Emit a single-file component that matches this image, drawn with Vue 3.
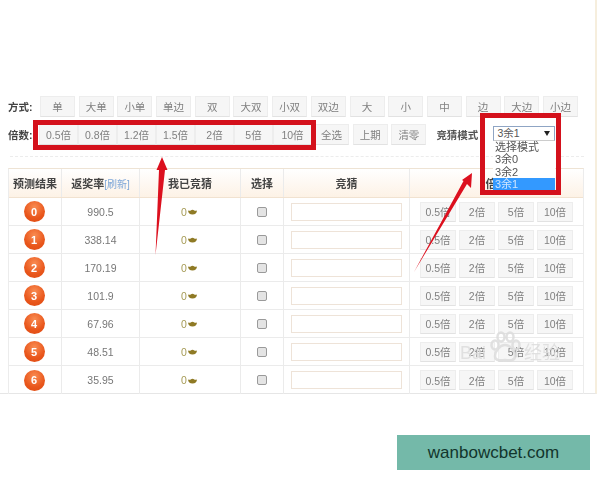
<script setup>
const modes = ['单','大单','小单','单边','双','大双','小双','双边','大','小','中','边','大边','小边']
const mults = ['0.5倍','0.8倍','1.2倍','1.5倍','2倍','5倍','10倍']
const actions = ['全选','上期','清零']
const rowBtns = ['0.5倍','2倍','5倍','10倍']
const rates = ['990.5','338.14','170.19','101.9','67.96','48.51','35.95']
const options = ['选择模式','3余0','3余2','3余1']
</script>

<template>
  <div class="stage">
    <div class="panel">
      <div class="toolbar">
        <div class="bar">
          <b class="label">方式:</b>
          <div class="btns spaced">
            <span v-for="m in modes" :key="m" class="btn mode">{{ m }}</span>
          </div>
        </div>
        <div class="bar second">
          <b class="label">倍数:</b>
          <div class="btns mults">
            <span v-for="m in mults" :key="m" class="btn mult">{{ m }}</span>
          </div>
          <div class="btns spaced actions">
            <span v-for="a in actions" :key="a" class="btn action">{{ a }}</span>
          </div>
          <b class="mode-label">竞猜模式</b>
          <div class="select-closed">3余1<i class="caret"></i></div>
        </div>
      </div>
      <div class="rule"></div>
      <div class="table">
        <div class="row head">
          <div class="cell">预测结果</div>
          <div class="cell">返奖率<span class="link">[刷新]</span></div>
          <div class="cell">我已竞猜</div>
          <div class="cell">选择</div>
          <div class="cell">竞猜</div>
          <div class="cell">倍数</div>
        </div>
        <div v-for="(r, i) in rates" :key="r" class="row">
          <div class="cell first"><span class="ball">{{ i }}</span></div>
          <div class="cell">{{ r }}</div>
          <div class="cell gold">0
            <svg class="ingot" viewBox="0 0 10 6" width="9" height="6">
              <path d="M0 1.2 Q2 2 3 1.2 Q5 0 7 1.2 Q8 2 10 1.2 Q9.6 5.6 5 5.8 Q.4 5.6 0 1.2Z" fill="#8f7a25"/>
            </svg>
          </div>
          <div class="cell"><span class="check"></span></div>
          <div class="cell"><span class="input"></span></div>
          <div class="cell quick">
            <span v-for="b in rowBtns" :key="b" class="btn small">{{ b }}</span>
          </div>
        </div>
      </div>
    </div>
    <div class="promo-wrap"><div class="promo">wanbowcbet.com</div></div>

    <div class="watermark">
      <span>Bai</span>
      <svg viewBox="0 0 32 32" width="32" height="32">
        <g fill="none" stroke="#dcdcdc" stroke-width="2.500">
          <ellipse cx="6" cy="14" rx="3.500" ry="4.500"/>
          <ellipse cx="12" cy="6" rx="3.500" ry="4.500"/>
          <ellipse cx="21" cy="6" rx="3.500" ry="4.500"/>
          <ellipse cx="27" cy="14" rx="3.500" ry="4.500"/>
          <path d="M16 14c-5 0-10 6-10 11 0 6 7 4 10 4s10 2 10-4c0-5-5-11-10-11Z"/>
        </g>
      </svg>
      <span>经验</span>
    </div>

    <div class="red-box box-a"></div>
    <div class="dropdown">
      <div v-for="(o, i) in options" :key="o" class="opt" :class="{ on: i === 3 }">{{ o }}</div>
    </div>
    <div class="red-box box-b"></div>

    <svg class="arrows" viewBox="0 0 600 480" width="600" height="480">
      <path d="M162 157 L167.500 170 L165 170 L155.500 255 L159 170 L156.500 170Z" fill="#dc101e"/>
      <path d="M472 173 L471 188 L467 184 L414 272 L463.500 181 L462 180Z" fill="#dc101e"/>
    </svg>
  </div>
</template>

<style>
html, body { margin: 0; background: #fff; }
</style>

<style scoped>
.stage {
  position: relative;
  width: 600px;
  height: 480px;
  overflow: hidden;
  background: #fff;
  font-family: "Liberation Sans", "Noto Sans CJK SC", sans-serif;
  font-size: 10.5px;
  color: #777;
}
.panel {
  height: 394px;
  padding: 96px 0 0 8px;
  box-sizing: border-box;
  width: 597px;
  border-right: 2px solid #f6eedd;
  border-bottom: 1px solid #e6e6e6;
  filter: blur(0.5px);
}
.toolbar { display: flex; flex-direction: column; gap: 7px; }
.bar { display: flex; align-items: center; height: 21px; }
.label { width: 32px; color: #444; font-size: 10.5px; white-space: nowrap; }
.btns { display: flex; }
.spaced { gap: 3.700px; }
.btn {
  display: flex;
  align-items: center;
  justify-content: center;
  box-sizing: border-box;
  height: 21px;
  background: #f6f6f6;
  border: 1px solid #ededed;
  border-bottom-color: #e2e2e2;
  color: #808080;
  white-space: nowrap;
}
.mode { width: 35px; }
.mults { margin-left: -1px; }
.mult { width: 39px; }
.actions { margin-left: 2px; }
.action { width: 35px; }
.mode-label { margin-left: 10px; color: #555; font-weight: 700; white-space: nowrap; }
.select-closed {
  position: relative;
  box-sizing: border-box;
  width: 62px;
  height: 15px;
  margin: 0 0 2px 15px;
  padding-left: 3px;
  line-height: 13px;
  border: 1px solid #8fa5c4;
  border-bottom-color: #ccc;
  background: #fff;
  color: #555;
}
.caret {
  position: absolute;
  right: 4px;
  top: 4px;
  border: 3px solid transparent;
  border-top: 5px solid #222;
  border-bottom: 0;
}
.rule {
  width: 574px;
  height: 0;
  margin: 11px 0 11px 2px;
  border-top: 1px dashed #ececec;
}
.table {
  width: 574px;
  border-top: 1px solid #eee3d4;
  border-left: 1px solid #ececec;
  border-right: 1px solid #ececec;
}
.row {
  display: grid;
  grid-template-columns: 53px 78px 101px 43px 126px 1fr;
  height: 28px;
  border-bottom: 1px solid #ebebeb;
  box-sizing: border-box;
}
.row:last-child { border-bottom: 0; }
.head {
  height: 29px;
  background: linear-gradient(#fff, #fdf2e6);
  border-bottom-color: #f1e2d0;
}
.head .cell { color: #444; font-weight: 700; font-size: 11px; }
.cell {
  display: flex;
  align-items: center;
  justify-content: center;
  border-right: 1px solid #ebebeb;
  white-space: nowrap;
}
.cell:last-child { border-right: 0; }
.first { padding-right: 2px; }
.link { color: #7da6d8; font-weight: 400; font-size: 10px; }
.ball {
  display: flex;
  align-items: center;
  justify-content: center;
  width: 21px;
  height: 21px;
  border-radius: 50%;
  background: radial-gradient(circle at 50% 30%, #f98c52, #e9561b 60%, #dd4a12);
  color: #fff;
  font-weight: 700;
  font-size: 11px;
}
.gold { color: #a59a55; gap: 1px; padding-right: 2px; }
.ingot { margin-top: 1px; }
.check {
  box-sizing: border-box;
  width: 10px;
  height: 10px;
  border: 1px solid #9a9a9a;
  border-radius: 2px;
  background: #e4e4e4;
}
.input {
  box-sizing: border-box;
  width: 111px;
  height: 18px;
  border: 1px solid #eee3d8;
  background: #fff;
}
.quick { gap: 3px; box-sizing: border-box; }
.small { width: 36px; height: 20px; }
.promo-wrap {
  display: flex;
  justify-content: flex-end;
  padding: 41px 10px 0 0;
}
.promo {
  width: 193px;
  height: 35px;
  line-height: 35px;
  text-align: center;
  background: #74b9a9;
  color: #12352c;
  font-size: 17px;
}
.watermark {
  position: absolute;
  left: 460px;
  top: 331px;
  display: flex;
  align-items: flex-end;
  gap: 3px;
  font-size: 18px;
  line-height: 20px;
  color: #dcdcdc;
  opacity: 0.85;
  filter: blur(0.5px);
}
.red-box {
  position: absolute;
  box-sizing: border-box;
  border: 5px solid #d4111c;
}
.box-a { left: 33px; top: 120px; width: 283px; height: 30px; }
.box-b { left: 480px; top: 113px; width: 81px; height: 82px; }
.dropdown {
  position: absolute;
  left: 493px;
  top: 141px;
  width: 62px;
  height: 49px;
  background: #fff;
  color: #555;
  font-size: 11px;
  filter: blur(0.3px);
}
.opt { height: 12.250px; line-height: 12px; padding-left: 2px; }
.opt.on { background: #3399ff; color: #cfe6ff; }
.arrows { position: absolute; left: 0; top: 0; pointer-events: none; }
</style>
